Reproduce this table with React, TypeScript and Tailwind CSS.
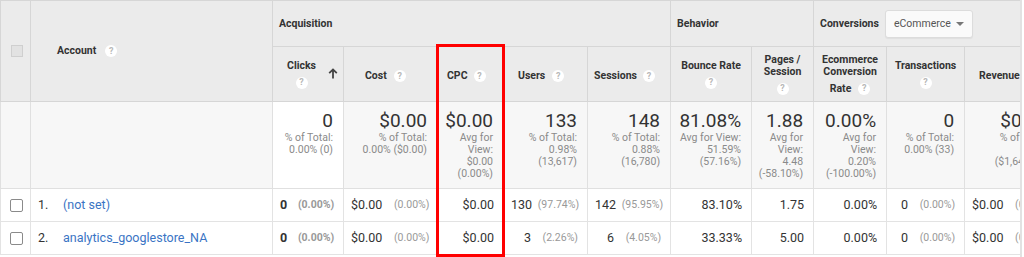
import React from "react";

const font = "font-['Roboto','Liberation_Sans',sans-serif]";

function Help({ className = "" }: { className?: string }) {
    return (
        <span className={`inline-flex items-center justify-center w-[12px] h-[12px] rounded-full bg-white text-[#b8b8b8] text-[9px] font-bold leading-none align-middle ${className}`}>
            ?
        </span>
    );
}

type Total = { value: string; lines: string[]; sorted?: boolean };

const totals: Total[] = [
    { value: "0", lines: ["% of Total:", "0.00% (0)"], sorted: true },
    { value: "$0.00", lines: ["% of Total:", "0.00% ($0.00)"] },
    { value: "$0.00", lines: ["Avg for", "View:", "$0.00", "(0.00%)"] },
    { value: "133", lines: ["% of Total:", "0.98%", "(13,617)"] },
    { value: "148", lines: ["% of Total:", "0.88%", "(16,780)"] },
    { value: "81.08%", lines: ["Avg for View:", "51.59%", "(57.16%)"] },
    { value: "1.88", lines: ["Avg for", "View:", "4.48", "(-58.10%)"] },
    { value: "0.00%", lines: ["Avg for", "View:", "0.20%", "(-100.00%)"] },
    { value: "0", lines: ["% of Total:", "0.00% (33)"] },
    { value: "$0.00", lines: ["% of Total:", "0.00%", "($1,646.37)"] },
];

type Cell = { n: string; p?: string; bold?: boolean };

const rows: { name: string; cells: Cell[] }[] = [
    {
        name: "(not set)",
        cells: [
            { n: "0", p: "(0.00%)", bold: true },
            { n: "$0.00", p: "(0.00%)" },
            { n: "$0.00" },
            { n: "130", p: "(97.74%)" },
            { n: "142", p: "(95.95%)" },
            { n: "83.10%" },
            { n: "1.75" },
            { n: "0.00%" },
            { n: "0", p: "(0.00%)" },
            { n: "$0.00", p: "(0.00%)" },
        ],
    },
    {
        name: "analytics_googlestore_NA",
        cells: [
            { n: "0", p: "(0.00%)", bold: true },
            { n: "$0.00", p: "(0.00%)" },
            { n: "$0.00" },
            { n: "3", p: "(2.26%)" },
            { n: "6", p: "(4.05%)" },
            { n: "33.33%" },
            { n: "5.00" },
            { n: "0.00%" },
            { n: "0", p: "(0.00%)" },
            { n: "$0.00", p: "(0.00%)" },
        ],
    },
];

const th = "border border-[#d6d6d6] bg-[#ebebeb] text-[#333] text-[10.5px] font-bold leading-[12px] p-0";

export default function App() {
    return (
        <div className={`${font} bg-white w-[1024px] h-[257px] overflow-hidden`}>
            <div className="relative w-[1022px] h-[257px] overflow-hidden border-r-2 border-[#e2e2e2]">
                <table className="table-fixed border-collapse w-[1058px]">
                    <colgroup>
                        <col className="w-[30px]" />
                        <col className="w-[242px]" />
                        <col className="w-[71px]" />
                        <col className="w-[94px]" />
                        <col className="w-[66px]" />
                        <col className="w-[84px]" />
                        <col className="w-[83px]" />
                        <col className="w-[81px]" />
                        <col className="w-[62px]" />
                        <col className="w-[73px]" />
                        <col className="w-[78px]" />
                        <col className="w-[94px]" />
                    </colgroup>
                    <thead>
                        <tr className="h-[46px]">
                            <th rowSpan={2} className={`${th} text-left pl-[10px]`}>
                                <span className="block w-[12px] h-[12px] bg-[#e2e2e2] border border-[#cfcfcf]" />
                            </th>
                            <th rowSpan={2} className={`${th} text-left pl-[26px]`}>
                                <span className="inline-flex items-center">
                                    Account <Help className="ml-[9px]" />
                                </span>
                            </th>
                            <th colSpan={5} className={`${th} text-left pl-[6px]`}>Acquisition</th>
                            <th colSpan={2} className={`${th} text-left pl-[6px]`}>Behavior</th>
                            <th colSpan={3} className={`${th} text-left pl-[6px]`}>
                                <div className="flex items-center">
                                    <span>Conversions</span>
                                    <div className="ml-[6px] flex items-center justify-between w-[88px] h-[28px] pl-[8px] pr-[8px] bg-[#fafafa] border border-[#dcdcdc] rounded-[3px] shadow-[0_1px_1px_rgba(0,0,0,0.05)]">
                                        <span className="text-[10.5px] font-normal text-[#555]">eCommerce</span>
                                        <span className="w-0 h-0 border-l-[4px] border-r-[4px] border-t-[4px] border-l-transparent border-r-transparent border-t-[#777]" />
                                    </div>
                                </div>
                            </th>
                        </tr>
                        <tr className="h-[55px]">
                            <th className={`${th} bg-[#e0e0e0]`}>
                                <div className="flex items-center pr-[5px]">
                                    <div className="flex-1 flex flex-col items-center pl-[2px]">
                                        <span>Clicks</span>
                                        <Help className="mt-[5px]" />
                                    </div>
                                    <svg width="10" height="11" viewBox="0 0 10 11" className="mt-[-1px]">
                                        <path d="M5 1.5v9M1.2 5.2 5 1.4l3.8 3.8" stroke="#444" strokeWidth="1.8" fill="none" />
                                    </svg>
                                </div>
                            </th>
                            <th className={`${th} text-left pl-[21px] pt-[4px]`}>
                                <span className="inline-flex items-center">Cost<Help className="ml-[7px]" /></span>
                            </th>
                            <th className={`${th} text-left pl-[9px] pt-[4px]`}>
                                <span className="inline-flex items-center">CPC<Help className="ml-[6px]" /></span>
                            </th>
                            <th className={`${th} text-left pl-[14px] pt-[4px]`}>
                                <span className="inline-flex items-center">Users<Help className="ml-[7px]" /></span>
                            </th>
                            <th className={`${th} text-left pl-[6px] pt-[4px]`}>
                                <span className="inline-flex items-center">Sessions<Help className="ml-[6px]" /></span>
                            </th>
                            <th className={th}>
                                <div className="flex flex-col items-center">
                                    <span>Bounce Rate</span>
                                    <Help className="mt-[5px]" />
                                </div>
                            </th>
                            <th className={th}>
                                <div className="flex flex-col items-center">
                                    <span>Pages /<br />Session</span>
                                    <Help className="mt-[5px]" />
                                </div>
                            </th>
                            <th className={th}>
                                <div className="flex flex-col items-center">
                                    <span>Ecommerce<br />Conversion</span>
                                    <span className="inline-flex items-center mt-[5px]">Rate<Help className="ml-[7px]" /></span>
                                </div>
                            </th>
                            <th className={th}>
                                <div className="flex flex-col items-center">
                                    <span>Transactions</span>
                                    <Help className="mt-[5px]" />
                                </div>
                            </th>
                            <th className={`${th} text-left pl-[14px] pt-[4px]`}>Revenue</th>
                        </tr>
                    </thead>
                    <tbody>
                        <tr className="h-[87px]">
                            <td className="border border-[#e0e0e0] bg-[#f7f7f7]" />
                            <td className="border border-[#e0e0e0] bg-[#f7f7f7]" />
                            {totals.map((t, i) => (
                                <td
                                    key={i}
                                    className={`border border-[#e0e0e0] align-top text-right pt-[8px] pr-[10px] ${t.sorted ? "bg-white" : "bg-[#f7f7f7]"}`}
                                >
                                    <div className="text-[19px] leading-[22px] text-[#333] whitespace-nowrap">{t.value}</div>
                                    {t.lines.map((l, j) => (
                                        <div key={j} className="text-[10.5px] leading-[12px] text-[#8a8a8a] whitespace-nowrap">{l}</div>
                                    ))}
                                </td>
                            ))}
                        </tr>
                        {rows.map((r, ri) => (
                            <tr key={ri} className="h-[33px] text-[12.5px] text-[#333]">
                                <td className="border border-[#e3e3e3] pl-[9px]">
                                    <span className="block w-[13px] h-[13px] rounded-[2px] border-[1.5px] border-[#8a8a8a] bg-white" />
                                </td>
                                <td className="border border-[#e3e3e3] pl-[7px] whitespace-nowrap">
                                    <span className="inline-block w-[25px]">{ri + 1}.</span>
                                    <span className="text-[#3a74c4]">{r.name}</span>
                                </td>
                                {r.cells.map((c, ci) =>
                                    c.p ? (
                                        <td key={ci} className="border border-[#e3e3e3] pl-[7px] pr-[9px]">
                                            <div className="flex items-center whitespace-nowrap">
                                                <span className={`flex-1 text-right ${c.bold ? "font-bold" : ""}`}>{c.n}</span>
                                                <span className={`w-[47px] shrink-0 text-right text-[10.5px] text-[#999] ${c.bold ? "font-bold" : ""}`}>{c.p}</span>
                                            </div>
                                        </td>
                                    ) : (
                                        <td key={ci} className="border border-[#e3e3e3] text-right pr-[9px] whitespace-nowrap">{c.n}</td>
                                    )
                                )}
                            </tr>
                        ))}
                    </tbody>
                </table>
                <div className="absolute left-[436px] top-[44px] w-[69px] h-[213px] border-[3px] border-[#ff0000]" />
            </div>
        </div>
    );
}
